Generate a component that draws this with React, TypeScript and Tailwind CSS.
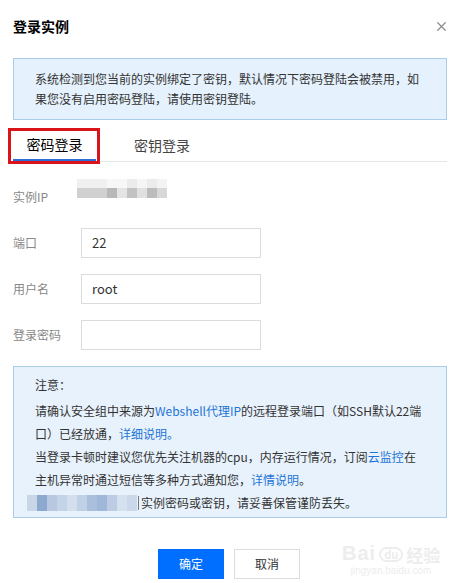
import { X } from 'lucide-react';

const ipTop = ['#f0f0f0', '#f0f0f0', '#f0f0f0', '#f7f7f7', '#f7f7f7', '#ebebeb', '#f5f5f5', '#ebebeb', '#f3f3f3'];
const ipBottom = ['#d0d0d0', '#d0d0d0', '#d0d0d0', '#b8b8b8', '#e4e4e4', '#c2c2c2', '#e0e0e0', '#bcbcbc', '#d8d8d8'];
const blurCells = ['#c9d6e8', '#8ea9cf', '#b7c8e0', '#c4d3e6', '#d3dfee', '#c0d0e5', '#a9bfdc', '#9fb7d8', '#bccde3', '#d6e1ef', '#cbd8ea'];

function FieldRow({ label, value }: { label: string; value?: string }) {
  return (
    <div className="flex items-center h-[30px]">
      <div className="w-[68px] text-[12px] text-[#888]">{label}</div>
      <div className="w-[180px] h-[30px] border border-[#dcdcdc] flex items-center pl-[10px] text-[13px] text-[#333]">
        {value}
      </div>
    </div>
  );
}

export default function App() {
  return (
    <div
      className="relative w-[460px] h-[583px] bg-white px-[13px] overflow-hidden"
      style={{ fontFamily: '"Noto Sans CJK SC", "Noto Sans", sans-serif' }}
    >
      <div className="h-[52px] flex items-center justify-between">
        <h1 className="text-[14px] font-bold text-black leading-[20px]">登录实例</h1>
        <X size={15} strokeWidth={2} className="text-[#8c8c8c] mr-[-2px]" />
      </div>

      <div className="mt-[6px] border border-[#a9cde9] bg-[#e5f1fc] px-[21px] py-[10px] text-[12px] leading-[20px] text-[#333]">
        系统检测到您当前的实例绑定了密钥，默认情况下密码登陆会被禁用，如
        <br />
        果您没有启用密码登陆，请使用密钥登陆。
      </div>

      <div className="relative mt-[8px] flex border-b border-[#e5e5e5]">
        <div className="w-[83px] h-[33px] pt-[2px] flex items-center justify-center border-b-2 border-[#2b6ed8] text-[14px] text-black">
          密码登录
        </div>
        <div className="ml-[23px] px-[15px] h-[33px] pt-[2px] flex items-center text-[14px] text-[#444]">
          密钥登录
        </div>
        <div className="absolute left-[-5px] top-0 w-[92px] h-[36px] border-[3px] border-[#d9141b]" />
      </div>

      <div className="mt-[17px] flex items-start">
        <div className="w-[64px] mt-[8px] text-[12px] leading-[20px] text-[#888]">实例IP</div>
        <div className="flex flex-col">
          <div className="flex">
            {ipTop.map((c, i) => (
              <div key={i} className="w-[10px] h-[9px]" style={{ background: c }} />
            ))}
          </div>
          <div className="flex">
            {ipBottom.map((c, i) => (
              <div key={i} className="w-[10px] h-[10px]" style={{ background: c }} />
            ))}
          </div>
        </div>
      </div>

      <div className="mt-[21px] flex flex-col gap-[16px]">
        <FieldRow label="端口" value="22" />
        <FieldRow label="用户名" value="root" />
        <FieldRow label="登录密码" />
      </div>

      <div className="mt-[16px] border border-[#a9cde9] bg-[#e8f2fc] pl-[21px] pr-[10px] pt-[6px] pb-[3px] text-[12px] leading-[23px] text-[#333]">
        <p className="mb-[3px]">注意：</p>
        <p>
          请确认安全组中来源为<span className="text-[#1e74d6]">Webshell代理IP</span>的远程登录端口（如SSH默认22端
          <br />
          口）已经放通，<span className="text-[#1e74d6]">详细说明。</span>
        </p>
        <p>
          当登录卡顿时建议您优先关注机器的cpu，内存运行情况，订阅<span className="text-[#1e74d6]">云监控</span>在
          <br />
          主机异常时通过短信等多种方式通知您，<span className="text-[#1e74d6]">详情说明</span>。
        </p>
        <p className="flex items-center -ml-[8px]">
          <span className="flex h-[16px] mr-[1px]">
            {blurCells.map((c, i) => (
              <span key={i} className="w-[10px] h-[16px] block" style={{ background: c }} />
            ))}
          </span>
          <span className="w-[1px] h-[14px] bg-[#777] mr-[2px]" />
          实例密码或密钥，请妥善保管谨防丢失。
        </p>
      </div>

      <div className="mt-[31px] flex justify-center gap-[10px] pr-[2px]">
        <button className="w-[66px] h-[30px] bg-[#006eff] text-white text-[12px]">确定</button>
        <button className="w-[66px] h-[30px] border border-[#dddddd] bg-white text-[#333] text-[12px]">取消</button>
      </div>

      <div className="absolute left-[342px] top-[543px] flex flex-col items-center text-[#ededed] select-none">
        <div className="flex items-end gap-[3px] leading-none">
          <span className="text-[20px] font-bold tracking-[1px]" style={{ fontFamily: '"Liberation Sans", sans-serif' }}>
            Bai
          </span>
          <span className="text-[11px] font-bold border-2 border-[#ededed] rounded-full px-[3px] mb-[1px]">du</span>
          <span className="text-[17px] font-bold">经验</span>
        </div>
        <span className="text-[10px] leading-[12px] mt-[2px]" style={{ fontFamily: '"Liberation Sans", sans-serif' }}>
          jingyan.baidu.com
        </span>
      </div>
    </div>
  );
}
